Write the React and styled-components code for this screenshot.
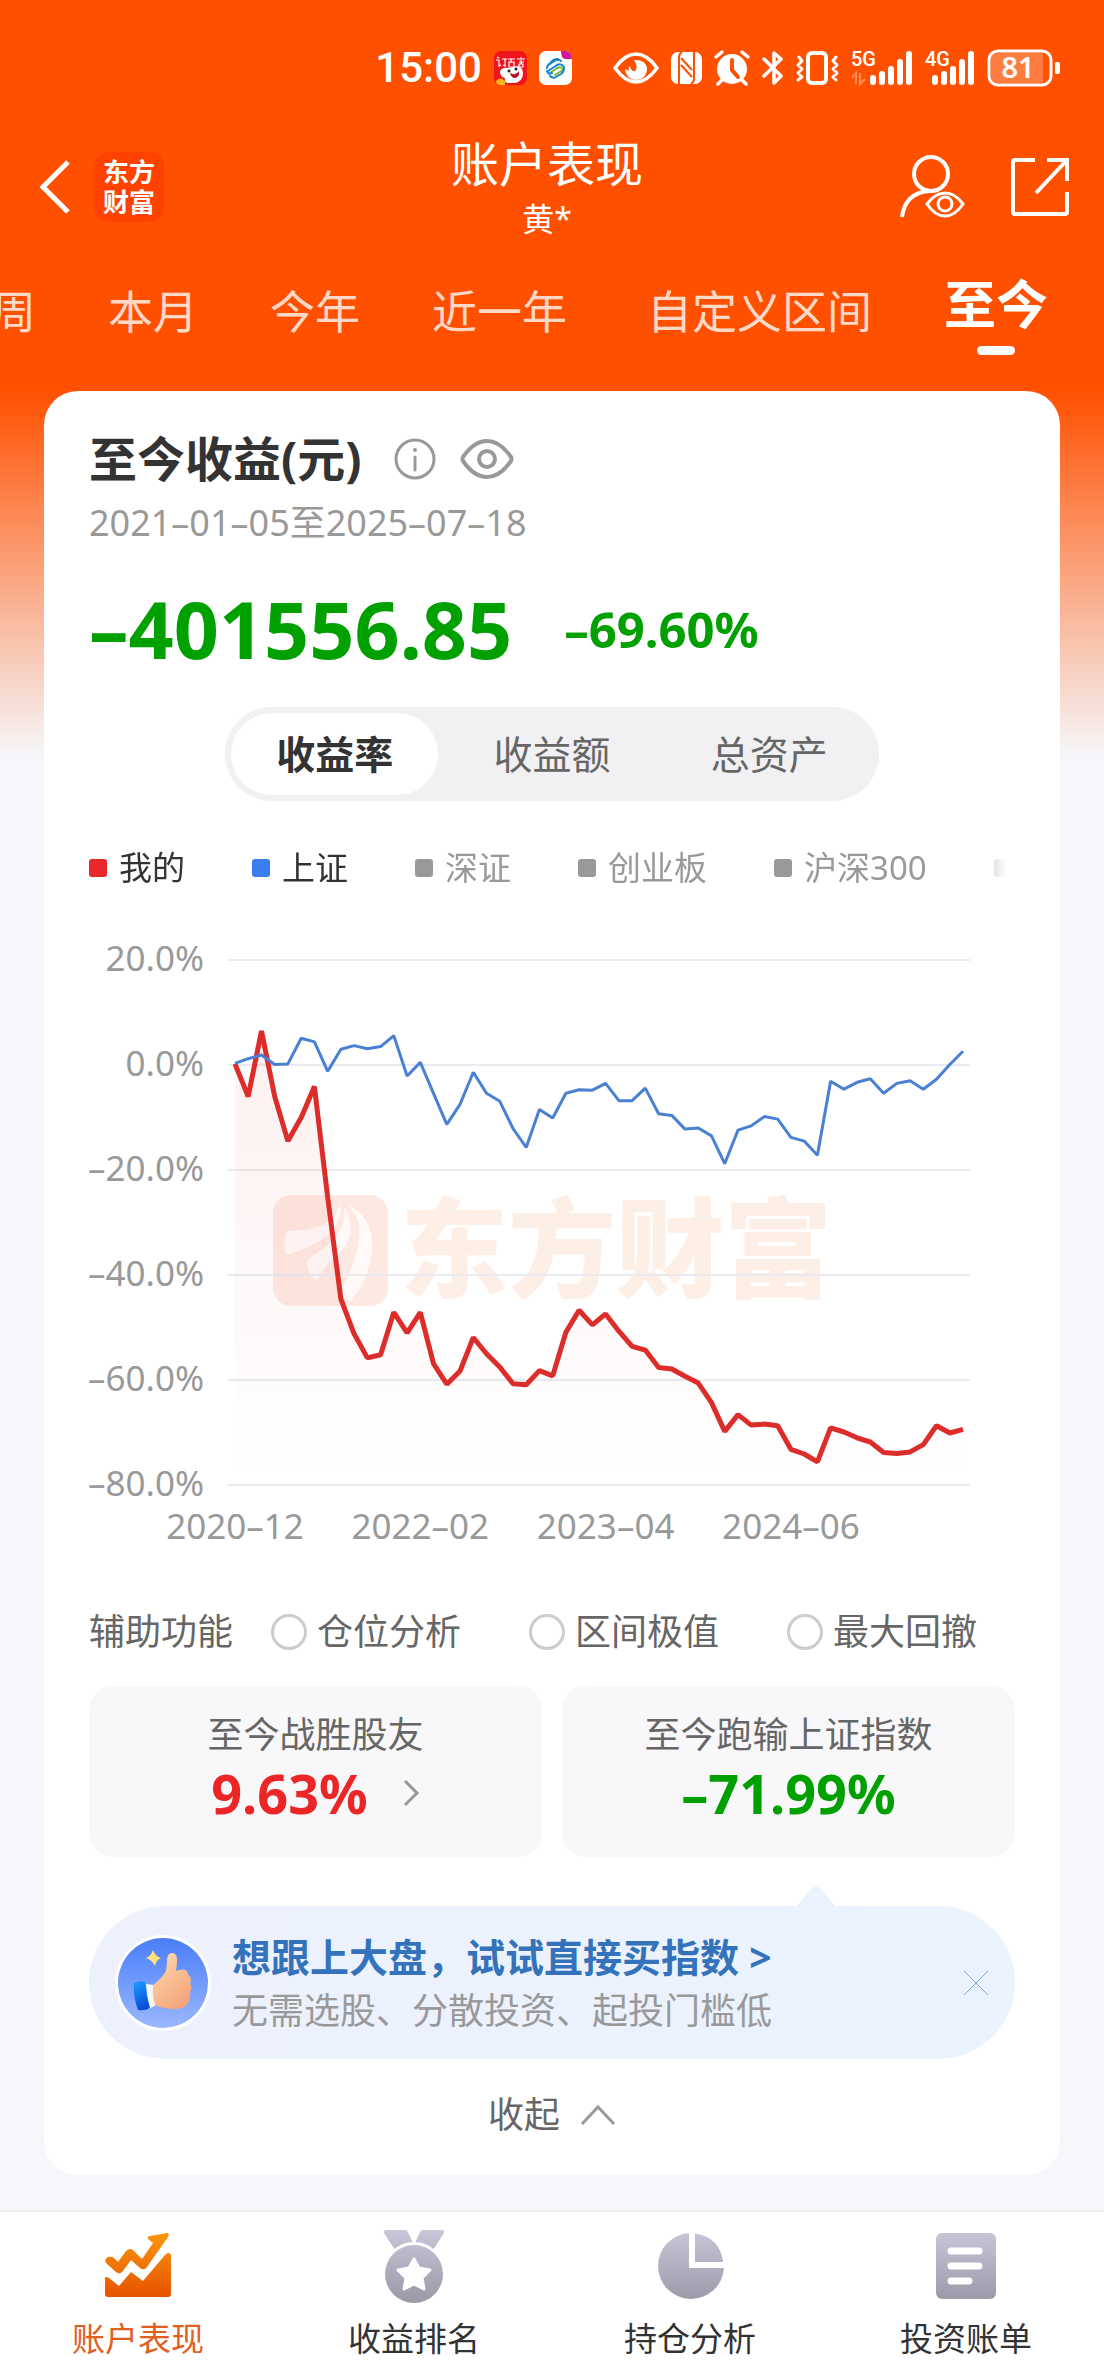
import React, { useState } from 'react';
import styled, { createGlobalStyle } from 'styled-components';

const GlobalStyle = createGlobalStyle`
  * {
    box-sizing: border-box;
  }

  body {
    margin: 0;
    background: #f6f7fa;
    color: #333;
    font-family: 'Noto Sans', 'Noto Sans CJK SC', sans-serif;
  }

  button {
    padding: 0;
    border: none;
    background: none;
    color: inherit;
    font: inherit;
    white-space: nowrap;
    cursor: pointer;
  }

  svg {
    display: block;
    flex-shrink: 0;
    overflow: visible;
  }
`;

const Page = styled.div`
  display: flex;
  flex-direction: column;
  min-height: 100vh;
  overflow: hidden;
  background: linear-gradient(180deg, #ff5000 0, #ff5000 390px, #f6f7fa 756px);
`;

const StatusBar = styled.div`
  display: flex;
  justify-content: space-between;
  align-items: center;
  height: 100px;
  padding: 36px 44px 0 34%;
  color: white;
`;

const StatusGroup = styled.div`
  display: flex;
  align-items: center;
  gap: 12px;
`;

const Time = styled.div`
  font-family: Roboto, sans-serif;
  font-size: 42px;
  line-height: 48px;
  font-weight: 500;
`;

const Header = styled.header`
  display: grid;
  grid-template-columns: 1fr auto 1fr;
  align-items: center;
  padding: 32px 34px 0 24px;
  color: white;
`;

const HeaderSide = styled.div`
  display: flex;
  align-items: center;
  justify-content: ${(props) => (props.$end ? 'flex-end' : 'flex-start')};
  gap: ${(props) => (props.$end ? '46px' : '8px')};
`;

const BackButton = styled.button`
  && {
    padding: 0 16px;
  }
`;

const BrandBadge = styled.div`
  width: 70px;
  height: 70px;
  padding: 5px 0;
  border-radius: 14px;
  background: #ff4200;
  font-size: 26px;
  line-height: 30px;
  font-weight: 700;
  text-align: center;
`;

const Heading = styled.div`
  text-align: center;
`;

const Title = styled.h1`
  margin: 0;
  font-size: 48px;
  line-height: 64px;
  font-weight: 400;
`;

const Subtitle = styled.div`
  font-size: 32px;
  line-height: 46px;
`;

const Tabs = styled.nav`
  display: flex;
  justify-content: flex-end;
  gap: 72px;
  height: 149px;
  padding: 32px 56px 0 0;
`;

const Tab = styled.button`
  display: flex;
  flex-direction: column;
  align-items: center;
  flex-shrink: 0;
  align-self: flex-start;
  color: ${(props) => (props.$active ? 'white' : '#ffd9c8')};
  font-size: ${(props) => (props.$active ? '52px' : '45px')};
  font-weight: ${(props) => (props.$active ? 700 : 400)};
  line-height: ${(props) => (props.$active ? '60px' : '76px')};

  && {
    padding-left: ${(props) => (props.$wide ? '8px' : '0')};
  }

  &::after {
    content: '';
    display: ${(props) => (props.$active ? 'block' : 'none')};
    width: 38px;
    height: 9px;
    margin-top: 12px;
    border-radius: 5px;
    background: white;
  }
`;

const Card = styled.main`
  margin: 0 44px 35px;
  padding: 36px 45px;
  border-radius: 34px;
  background: white;
`;

const CardTitleRow = styled.div`
  display: flex;
  align-items: center;
  gap: 24px;
`;

const CardTitle = styled.h2`
  margin: 0 8px 0 0;
  font-size: 48px;
  line-height: 64px;
  font-weight: 700;
`;

const DateRange = styled.div`
  margin-top: 8px;
  color: #999;
  font-size: 36px;
  line-height: 48px;
`;

const AmountRow = styled.div`
  display: flex;
  align-items: center;
  gap: 52px;
  margin-top: 34px;
  color: #00a000;
  font-weight: 700;
  line-height: 96px;
`;

const Amount = styled.div`
  font-size: 79px;
`;

const Percent = styled.div`
  font-size: 49px;
`;

const Segments = styled.div`
  display: flex;
  gap: 10px;
  width: 654px;
  max-width: 100%;
  margin: 30px auto 0;
  padding: 6px;
  border-radius: 47px;
  background: #f1f1f4;
`;

const Segment = styled.button`
  flex: 1;
  border-radius: 41px;
  background: ${(props) => (props.$active ? 'white' : 'transparent')};
  color: ${(props) => (props.$active ? '#333' : '#666')};
  font-size: 39px;
  font-weight: ${(props) => (props.$active ? 700 : 400)};
  line-height: 82px;

  && {
    background: ${(props) => (props.$active ? 'white' : 'transparent')};
  }
`;

const Legend = styled.div`
  display: flex;
  gap: 67px;
  margin-top: 43px;
  overflow: hidden;
  mask-image: linear-gradient(90deg, black calc(100% - 60px), transparent calc(100% - 8px));
`;

const LegendItem = styled.button`
  display: flex;
  align-items: center;
  flex-shrink: 0;
  gap: 12px;
  color: ${(props) => (props.$on ? '#333' : '#999')};
  font-size: 33px;
  line-height: 48px;

  &::before {
    content: '';
    width: 18px;
    height: 18px;
    border-radius: 3px;
    background: ${(props) => props.$color};
  }
`;

const Chart = styled.svg`
  width: 100%;
  margin-top: 28px;
`;

const AxisText = styled.text`
  fill: #999;
  font-family: 'Noto Sans', sans-serif;
  font-size: 35px;
`;

const WatermarkText = styled.text`
  fill: #fdeee6;
  font-family: 'Noto Sans CJK SC', sans-serif;
  font-size: 108px;
  font-weight: 900;
`;

const Tools = styled.div`
  display: flex;
  align-items: center;
  justify-content: space-between;
  margin-top: 48px;
  padding-right: 38px;
  color: #666;
  font-size: 36px;
  line-height: 48px;
  white-space: nowrap;
`;

const ToolOptions = styled.div`
  display: flex;
  gap: 68px;
`;

const ToolOption = styled.label`
  display: flex;
  align-items: center;
  gap: 10px;
`;

const Radio = styled.input`
  appearance: none;
  width: 36px;
  height: 36px;
  margin: 0;
  border: 3px solid #ccc;
  border-radius: 50%;

  &:checked {
    border: 10px solid #ff5000;
  }
`;

const Stats = styled.div`
  display: grid;
  grid-template-columns: 1fr 1fr;
  gap: 20px;
  margin-top: 30px;
`;

const Stat = styled.div`
  display: flex;
  flex-direction: column;
  align-items: center;
  padding: 24px 0 31px;
  border-radius: 24px;
  background: #f8f8fa;
`;

const StatLabel = styled.div`
  color: #666;
  font-size: 36px;
  line-height: 50px;
`;

const StatValue = styled.div`
  display: flex;
  align-items: center;
  gap: 34px;
  color: ${(props) => (props.$up ? '#ec2527' : '#00a000')};
  font-size: 54px;
  font-weight: 700;
  line-height: 66px;
`;

const Banner = styled.aside`
  position: relative;
  display: flex;
  align-items: center;
  margin-top: 49px;
  padding: 22px 26px 22px 25px;
  border-radius: 77px;
  background: linear-gradient(90deg, #edf1fd, #eaf3fe);
`;

const BannerTip = styled.svg`
  position: absolute;
  right: 180px;
  bottom: 100%;
`;

const BannerText = styled.div`
  flex: 1;
  margin-left: 20px;
`;

const BannerLink = styled.a`
  display: block;
  color: #3473bb;
  font-size: 39px;
  font-weight: 700;
  line-height: 57px;
  text-decoration: none;
`;

const BannerNote = styled.div`
  color: #999;
  font-size: 36px;
  line-height: 52px;
`;

const Collapse = styled.button`
  display: flex;
  align-items: center;
  gap: 20px;
  margin: 32px auto 0;
  color: #666;
  font-size: 36px;
  line-height: 48px;
`;

const BottomNav = styled.nav`
  display: grid;
  grid-template-columns: repeat(4, 1fr);
  margin-top: auto;
  padding: 18px 0 15px;
  border-top: 2px solid #eee;
  background: white;
`;

const NavItem = styled.a`
  display: flex;
  flex-direction: column;
  align-items: center;
  gap: 11px;
  color: ${(props) => (props.$active ? '#e0601f' : '#333')};
  font-size: 33px;
  line-height: 48px;
  text-decoration: none;
`;

const TABS = ['本周', '本月', '今年', '近一年', '自定义区间', '至今'];
const SEGMENTS = ['收益率', '收益额', '总资产'];
const TOOLS = ['仓位分析', '区间极值', '最大回撤'];
const LEGEND = [
  { name: '我的', color: '#e8282a', on: true },
  { name: '上证', color: '#3a7eee', on: true },
  { name: '深证', color: '#999' },
  { name: '创业板', color: '#999' },
  { name: '沪深300', color: '#999' },
];

const MINE = [
  0.2, -6, 6.5, -6, -14.5, -10, -4.1, -25.2, -44.6, -51.2, -55.8, -55.2, -47.1, -51,
  -47.1, -56.9, -60.8, -58.3, -51.9, -55, -57.5, -60.7, -60.9, -58.2, -59.2, -50.9, -46.7, -49.5,
  -47.4, -50.7, -53.6, -54.3, -57.6, -57.9, -59.3, -60.6, -64.3, -69.8, -66.6, -68.6, -68.4, -68.7,
  -73.2, -74.1, -75.6, -69.1, -69.9, -71, -71.8, -73.8, -74, -73.7, -72.3, -68.7, -70.1, -69.4,
];
const INDEX = [
  0.3, 1.2, 1.9, 0.1, 0.2, 5.1, 4.4, -1.2, 3, 3.7, 3.1, 3.5, 5.6, -2.1,
  0.5, -5.4, -11.3, -7.5, -1.4, -5.4, -6.9, -12.1, -15.7, -8.5, -10.1, -5.4, -4.7, -4.8,
  -3.5, -6.8, -6.8, -4.4, -9.3, -9.6, -12.2, -12, -13.5, -18.8, -12.4, -11.6, -9.8, -10.3,
  -13.8, -14.5, -17.2, -3.1, -4.6, -3.3, -2.6, -5.4, -3.5, -3, -4.6, -2.7, 0.1, 2.6,
];
const MONTHS = ['2020–12', '2022–02', '2023–04', '2024–06'];

const xAt = (i) => 146 + (i * 728) / 55;
const yAt = (v) => 40 + (20 - v) * 5.25;
const toPoints = (values) => values.map((v, i) => `${xAt(i).toFixed(1)},${yAt(v).toFixed(1)}`).join(' ');

const StatusApps = () => (
  <>
    <svg width="33" height="34" viewBox="0 0 33 34">
      <rect width="33" height="34" rx="7" fill="#f0141e" />
      <path d="M2 9h3v6l2-1M3 6l2 1M8 8h5M11 8v7l-2-1M14 8h7M15 11h5v5h-5zM17 8v4M23 8h8M27 6v2M25 11h5M27 9v4M25 13h4v3h-4z" stroke="white" strokeWidth="1.2" fill="none" />
      <path d="M6 20q3-4 8-3l10-2q5 2 5 7 0 8-8 10h-8q-3-1-2-5-5-1-5-7z" fill="white" />
      <path d="M16 22q6 3 9-2 1 6-4 7-4 0-5-5z" fill="#b01522" />
      <circle cx="15" cy="20" r="1.5" fill="#222" />
      <circle cx="22" cy="18" r="1.5" fill="#222" />
      <path d="M2 30q4-5 9 0v4H7q-5 0-5-4z" fill="#ffb51c" />
    </svg>
    <svg width="33" height="34" viewBox="0 0 33 34">
      <rect width="33" height="34" rx="7" fill="white" />
      <path d="M22 0h4q7 0 7 8h-7q-4-1-4-8z" fill="#d2159a" />
      <g fill="none" strokeWidth="2" strokeLinecap="round">
        <path d="M8 17q0-3 4-5l5-3q3-1 5 1M9 20l9-6q4-2 7 2" stroke="#1784d2" />
        <path d="M11 22l7-5q4-2 6 1M16 24l8-5" stroke="#7cbb31" />
        <path d="M8 20q1 4 5 2M11 25q3 3 6 1l5-3q3-2 3-6" stroke="#1784d2" />
        <path d="M11 13q2-5 8-5" stroke="#1784d2" />
      </g>
    </svg>
  </>
);

const SignalIcon = ({ label, width, dim }) => {
  const heights = [10, 14, 19, 26, 34];
  return (
    <svg width={width} height="36" viewBox={`0 0 ${width} 36`} fill="white">
      <text x="0" y="16" fontFamily="Roboto, sans-serif" fontSize="20" fontWeight="500">{label}</text>
      {heights.map((h, i) => (
        <rect key={h} x={width - 43 + i * 9} y={35 - h} width="6" height={h} rx="3" />
      ))}
      {dim && <path d="M1 28l4-5v11M9 23v11l5-5" stroke="white" strokeWidth="2" fill="none" opacity="0.35" />}
    </svg>
  );
};

const StatusIcons = () => (
  <>
    <svg width="46" height="34" viewBox="0 0 46 34">
      <path d="M2 17Q12 3 23 3t21 14Q34 31 23 31T2 17z" fill="none" stroke="white" strokeWidth="3.5" />
      <path d="M21 9q11-1 13 8 0 11-11 12-10-1-11-11l4 2q-1-4 1-5 1 6 5 5 4-4-1-11z" fill="white" />
    </svg>
    <svg width="31" height="34" viewBox="0 0 31 34">
      <rect y="1" width="31" height="32" rx="7" fill="white" />
      <g stroke="#ff5000" strokeWidth="2" fill="none">
        <path d="M8 33V6q0-3 3-5M23 1v27q0 3-3 5" />
        <path d="M10 7l11 12M10 14l11 12" />
      </g>
    </svg>
    <svg width="36" height="36" viewBox="0 0 36 36">
      <circle cx="18" cy="19" r="15" fill="white" />
      <path d="M2 7l6-5M34 7l-6-5M8 30l-4 4M28 30l4 4" stroke="white" strokeWidth="3.5" strokeLinecap="round" />
      <path d="M18 10v10l6 7" stroke="#ff5000" strokeWidth="4" fill="none" strokeLinecap="round" />
    </svg>
    <svg width="22" height="36" viewBox="0 0 22 36">
      <path d="M2 9l17 17-7 7V3l7 6L2 26" fill="none" stroke="white" strokeWidth="3.5" strokeLinejoin="round" strokeLinecap="round" />
    </svg>
    <svg width="43" height="36" viewBox="0 0 43 36" fill="none" stroke="white">
      <rect x="12" y="3" width="18" height="30" rx="4" strokeWidth="4" />
      <path d="M3 7l3 4-4 4 4 4-4 4 4 4-4 3M40 7l-3 4 4 4-4 4 4 4-4 4 3 3" strokeWidth="3" strokeLinejoin="round" strokeLinecap="round" />
    </svg>
    <SignalIcon label="5G" width={62} dim />
    <SignalIcon label="4G" width={50} />
    <svg width="73" height="38" viewBox="0 0 73 38">
      <rect x="2" y="2" width="62" height="34" rx="9" fill="none" stroke="white" strokeWidth="3" />
      <path d="M11 4h45v30H11q-7 0-7-7V11q0-7 7-7z" fill="white" opacity="0.25" />
      <rect x="68" y="13" width="5" height="12" rx="2" fill="white" />
      <text x="31" y="29" textAnchor="middle" fill="white" fontFamily="'Noto Sans', sans-serif" fontSize="29" fontWeight="600">81</text>
    </svg>
  </>
);

const Watermark = () => (
  <g>
    <rect x="184" y="275" width="115" height="111" rx="18" fill="#fde9e2" />
    <g transform="translate(184 275)" fill="#fffaf8">
      <path d="M14 36q32 0 44-12 6-6 10-14 0 12-6 22-11 17-49 28-3-10 1-24z" />
      <path d="M71 12q2 18-8 30-9 10-27 21-4 4 0 13 2 6 8 10 8-17 21-27 22-20 6-47z" />
      <path d="M75 10q14 14 11 34-4 28-18 50l-1 4q4 6 11 8 18-22 21-50 2-34-24-46z" />
    </g>
    <WatermarkText x="311" y="369">东方财富</WatermarkText>
  </g>
);

const ReturnChart = () => (
  <Chart viewBox="0 0 926 640" role="img" aria-label="收益率走势">
    <defs>
      <linearGradient id="mineFill" gradientUnits="userSpaceOnUse" x1="0" y1="110" x2="0" y2="565">
        <stop offset="0" stopColor="#e8282a" stopOpacity="0.07" />
        <stop offset="1" stopColor="#e8282a" stopOpacity="0" />
      </linearGradient>
    </defs>
    <Watermark />
    {[20, 0, -20, -40, -60, -80].map((v) => (
      <g key={v}>
        <line x1="139" x2="881" y1={yAt(v)} y2={yAt(v)} stroke="#e8eaf0" strokeWidth="2" />
        <AxisText x="115" y={yAt(v) + 11} textAnchor="end">
          {`${v < 0 ? '–' : ''}${Math.abs(v).toFixed(1)}%`}
        </AxisText>
      </g>
    ))}
    {MONTHS.map((month, i) => (
      <AxisText key={month} x={xAt(i * 14)} y="619" textAnchor="middle">{month}</AxisText>
    ))}
    <polygon points={`${xAt(0)},565 ${toPoints(MINE)} ${xAt(55)},565`} fill="url(#mineFill)" />
    <polyline points={toPoints(MINE)} fill="none" stroke="#dc2d2b" strokeWidth="5" strokeLinejoin="bevel" />
    <polyline points={toPoints(INDEX)} fill="none" stroke="#4a80d4" strokeWidth="3" strokeLinejoin="bevel" />
  </Chart>
);

const ThumbIcon = () => (
  <svg width="98" height="98" viewBox="0 0 98 98">
    <defs>
      <linearGradient id="thumbBg" x2="0" y2="1">
        <stop offset="0" stopColor="#4a7df8" />
        <stop offset="1" stopColor="#9ab8ff" />
      </linearGradient>
      <linearGradient id="thumbHand" x2="0.6" y2="1">
        <stop offset="0" stopColor="#ffdcb4" />
        <stop offset="1" stopColor="#f5a67c" />
      </linearGradient>
      <linearGradient id="thumbCuff" x2="0.3" y2="1">
        <stop offset="0" stopColor="#1c9cff" />
        <stop offset="1" stopColor="#0a50d8" />
      </linearGradient>
    </defs>
    <circle cx="49" cy="49" r="48" fill="white" />
    <circle cx="49" cy="49" r="45" fill="url(#thumbBg)" />
    <path d="M39 16q2 6 8 8-5 2-6 8-3-6-9-8 5-2 7-8z" fill="#ffe07a" />
    <path d="M32 50l8 1 2 20-7 4z" fill="#f4f8ff" />
    <path d="M20 49q6-3 11-1 1 13 5 26-5 3-12 2-5-13-4-27z" fill="url(#thumbCuff)" />
    <path d="M39 51q9-7 13-14 1-6 1-12 1-7 6-6 5 1 4 10l-1 8q11-4 12 3 5 5 2 9 3 5 0 9 1 6-2 11-3 6-13 6-12 0-20-4-3-10-2-20z" fill="url(#thumbHand)" />
  </svg>
);

const NAV_ITEMS = [
  {
    name: '账户表现',
    icon: (
      <g fill="url(#navOn)">
        <path d="M5 33q-2-4 2-6 3-1 6 1l4 4 8-11q4-4 8 0l8 8 11-16-5-4q-1-3 2-3l17-3q3 0 1 4L46 37q-3 4-7 1l-9-8-8 11q-3 4-7 1z" />
        <path d="M4 48q1-2 4 0l10 8 12-14 12 9L64 25q4-4 6 0v39q0 3-3 3H7q-3 0-3-3z" />
      </g>
    ),
  },
  {
    name: '收益排名',
    icon: (
      <>
        <path d="M10 0h18q2 0 3 2l5 11h-6q-6 1-12 7L7 3q-1-3 3-3zM64 0H46q-2 0-3 2l-5 11h6q6 1 12 7L67 3q1-3-3-3z" fill="url(#navOff)" />
        <circle cx="37" cy="44" r="32" fill="white" />
        <circle cx="37" cy="44" r="29" fill="url(#navOff)" />
        <path d="M37 29l5 9 11 2-8 8 2 11-10-5-10 5 2-11-8-8 11-2z" fill="white" stroke="white" strokeWidth="3" strokeLinejoin="round" />
      </>
    ),
  },
  {
    name: '持仓分析',
    icon: (
      <g fill="url(#navOff)">
        <path d="M36 3v35h35A33 33 0 1 1 36 3z" />
        <path d="M42 3.500Q67 7 70 32H42z" />
      </g>
    ),
  },
  {
    name: '投资账单',
    icon: (
      <>
        <rect x="7" y="3" width="60" height="66" rx="6" fill="url(#navOff)" />
        <path d="M22 21h28M22 36h28M22 51h18" stroke="white" strokeWidth="7" strokeLinecap="round" />
      </>
    ),
  },
];

const App = () => {
  const [tab, setTab] = useState('至今');
  const [segment, setSegment] = useState('收益率');

  return (
    <Page>
      <GlobalStyle />
      <svg width="0" height="0" aria-hidden="true">
        <defs>
          <linearGradient id="navOn" gradientUnits="userSpaceOnUse" x1="0" y1="0" x2="0" y2="70">
            <stop offset="0" stopColor="#fb9a0c" />
            <stop offset="1" stopColor="#e64f00" />
          </linearGradient>
          <linearGradient id="navOff" gradientUnits="userSpaceOnUse" x1="0" y1="0" x2="0" y2="72">
            <stop offset="0" stopColor="#c8c6d8" />
            <stop offset="1" stopColor="#9a99a8" />
          </linearGradient>
        </defs>
      </svg>

      <StatusBar>
        <StatusGroup>
          <Time>15:00</Time>
          <StatusApps />
        </StatusGroup>
        <StatusGroup>
          <StatusIcons />
        </StatusGroup>
      </StatusBar>

      <Header>
        <HeaderSide>
          <BackButton aria-label="返回">
            <svg width="30" height="54" viewBox="0 0 30 54" fill="none" stroke="white" strokeWidth="5">
              <path d="M28 2L3 27l25 25" />
            </svg>
          </BackButton>
          <BrandBadge>东方<br />财富</BrandBadge>
        </HeaderSide>
        <Heading>
          <Title>账户表现</Title>
          <Subtitle>黄*</Subtitle>
        </Heading>
        <HeaderSide $end>
          <button aria-label="账户可见性">
            <svg width="64" height="64" viewBox="0 0 64 64" fill="none" stroke="white" strokeWidth="4">
              <circle cx="31" cy="19" r="17" />
              <path d="M2 62Q5 38 29 36" />
              <path d="M27 49q8-11 18-11t18 11q-8 12-18 12T27 49z" strokeWidth="3" />
              <circle cx="45" cy="49" r="7" strokeWidth="3" />
            </svg>
          </button>
          <button aria-label="分享">
            <svg width="60" height="60" viewBox="0 0 60 60" fill="none" stroke="white" strokeWidth="4">
              <path d="M25 3H5q-2 0-2 2v50q0 2 2 2h50q2 0 2-2V35" />
              <path d="M37 3h20v21M57 3L26 36" />
            </svg>
          </button>
        </HeaderSide>
      </Header>

      <Tabs>
        {TABS.map((name) => (
          <Tab key={name} $active={name === tab} $wide={name === '自定义区间'} onClick={() => setTab(name)}>
            {name}
          </Tab>
        ))}
      </Tabs>

      <Card>
        <CardTitleRow>
          <CardTitle>至今收益(元)</CardTitle>
          <button aria-label="说明">
            <svg width="42" height="42" viewBox="0 0 42 42" fill="none" stroke="#999">
              <circle cx="21" cy="21" r="19" strokeWidth="3" />
              <path d="M21 19v13" strokeWidth="3" strokeLinecap="round" />
              <circle cx="21" cy="12" r="2" fill="#999" stroke="none" />
            </svg>
          </button>
          <button aria-label="隐藏金额">
            <svg width="54" height="42" viewBox="0 0 54 42" fill="none" stroke="#999" strokeWidth="4">
              <path d="M3 19Q14 3 27 3t24 16q1 2 0 4Q40 39 27 39T3 23q-1-2 0-4z" />
              <circle cx="27" cy="21" r="8" />
            </svg>
          </button>
        </CardTitleRow>
        <DateRange>2021–01–05至2025–07–18</DateRange>
        <AmountRow>
          <Amount>–401556.85</Amount>
          <Percent>–69.60%</Percent>
        </AmountRow>

        <Segments>
          {SEGMENTS.map((name) => (
            <Segment key={name} $active={name === segment} onClick={() => setSegment(name)}>
              {name}
            </Segment>
          ))}
        </Segments>

        <Legend>
          {LEGEND.map((item) => (
            <LegendItem key={item.name} $color={item.color} $on={item.on}>{item.name}</LegendItem>
          ))}
          <LegendItem $color="#999" aria-label="更多指数" />
        </Legend>

        <ReturnChart />

        <Tools>
          辅助功能
          <ToolOptions>
            {TOOLS.map((name) => (
              <ToolOption key={name}>
                <Radio type="radio" name="tool" />
                {name}
              </ToolOption>
            ))}
          </ToolOptions>
        </Tools>

        <Stats>
          <Stat>
            <StatLabel>至今战胜股友</StatLabel>
            <StatValue $up>
              9.63%
              <svg width="18" height="28" viewBox="0 0 18 28" fill="none" stroke="#999" strokeWidth="3">
                <path d="M3 2l12 12L3 26" />
              </svg>
            </StatValue>
          </Stat>
          <Stat>
            <StatLabel>至今跑输上证指数</StatLabel>
            <StatValue>–71.99%</StatValue>
          </Stat>
        </Stats>

        <Banner>
          <BannerTip width="38" height="20" viewBox="0 0 38 20">
            <path d="M0 20L14 3q5-5 10 0l14 17z" fill="#ebf2fe" />
          </BannerTip>
          <ThumbIcon />
          <BannerText>
            <BannerLink href="#index">想跟上大盘，试试直接买指数 &gt;</BannerLink>
            <BannerNote>无需选股、分散投资、起投门槛低</BannerNote>
          </BannerText>
          <button aria-label="关闭">
            <svg width="26" height="26" viewBox="0 0 26 26" stroke="#7ba7d6" strokeWidth="1">
              <path d="M1 1l24 24M25 1L1 25" />
            </svg>
          </button>
        </Banner>

        <Collapse>
          收起
          <svg width="36" height="22" viewBox="0 0 36 22" fill="none" stroke="#999" strokeWidth="3">
            <path d="M2 20L18 3l16 17" />
          </svg>
        </Collapse>
      </Card>

      <BottomNav>
        {NAV_ITEMS.map((item, i) => (
          <NavItem key={item.name} href={`#nav-${i}`} $active={i === 0}>
            <svg width="74" height="74" viewBox="0 0 74 74">{item.icon}</svg>
            {item.name}
          </NavItem>
        ))}
      </BottomNav>
    </Page>
  );
};

export default App;
